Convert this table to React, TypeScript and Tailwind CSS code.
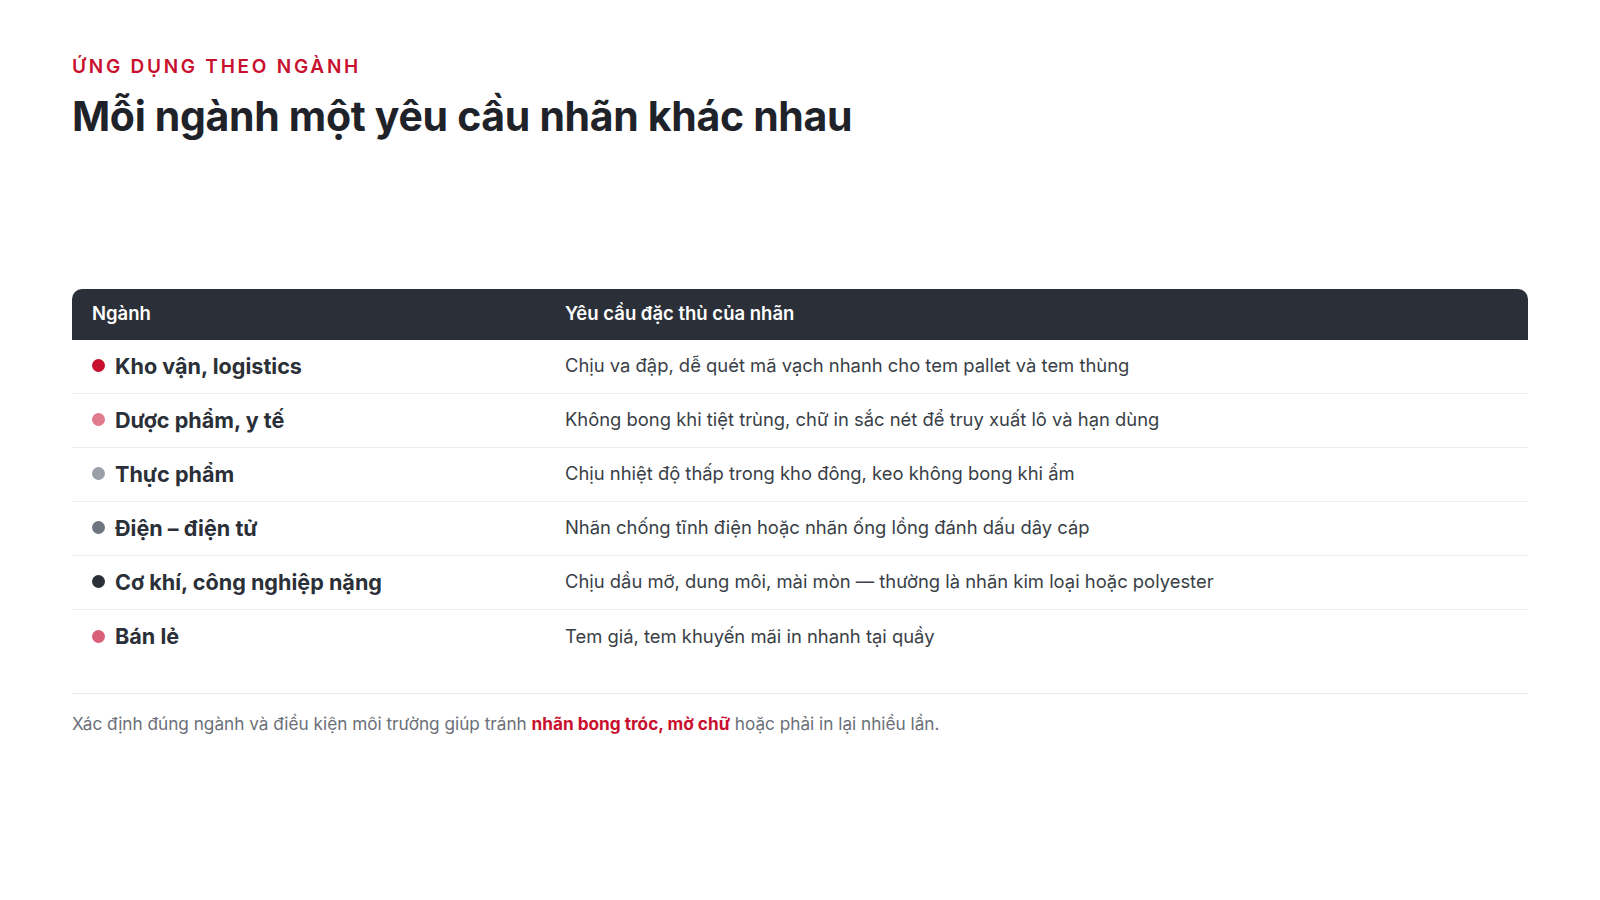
const rows = [
  { name: 'Kho vận, logistics', dot: 'bg-[#c8102e]', desc: 'Chịu va đập, dễ quét mã vạch nhanh cho tem pallet và tem thùng' },
  { name: 'Dược phẩm, y tế', dot: 'bg-[#e07a8c]', desc: 'Không bong khi tiệt trùng, chữ in sắc nét để truy xuất lô và hạn dùng' },
  { name: 'Thực phẩm', dot: 'bg-[#9aa0a8]', desc: 'Chịu nhiệt độ thấp trong kho đông, keo không bong khi ẩm' },
  { name: 'Điện – điện tử', dot: 'bg-[#6e7580]', desc: 'Nhãn chống tĩnh điện hoặc nhãn ống lồng đánh dấu dây cáp' },
  { name: 'Cơ khí, công nghiệp nặng', dot: 'bg-[#2b3038]', desc: 'Chịu dầu mỡ, dung môi, mài mòn — thường là nhãn kim loại hoặc polyester' },
  { name: 'Bán lẻ', dot: 'bg-[#d95f78]', desc: 'Tem giá, tem khuyến mãi in nhanh tại quầy' },
]

export default function App() {
  return (
    <div className="h-[900px] w-[1600px] bg-white px-[72px] pt-[53px] font-['Inter',sans-serif] text-[#1f2329]">
      <p className="text-[19px] font-semibold uppercase tracking-[0.145em] text-[#c8102e]">
        Ứng dụng theo ngành
      </p>
      <h1 className="mt-[8px] text-[41px] font-bold leading-[52px] tracking-[-0.008em] text-[#1f2329]">
        Mỗi ngành một yêu cầu nhãn khác nhau
      </h1>

      <div className="mt-[147px]">
        <div className="grid h-[51px] grid-cols-[496px_1fr] items-center rounded-t-[10px] bg-[#2b3038] text-[18.5px] font-semibold text-white">
          <div className="px-5">Ngành</div>
          <div className="-ml-[3px]">Yêu cầu đặc thù của nhãn</div>
        </div>
        {rows.map((r, i) => (
          <div
            key={r.name}
            className={`grid h-[54px] grid-cols-[496px_1fr] items-center ${i < rows.length - 1 ? 'border-b border-[#eceef1]' : ''}`}
          >
            <div className="flex items-center gap-[10px] px-5">
              <span className={`size-[13px] rounded-full ${r.dot}`} />
              <span className="text-[21.6px] font-bold text-[#2b3038]">{r.name}</span>
            </div>
            <div className="-ml-[3px] text-[18.4px] text-[#3a3f47]">{r.desc}</div>
          </div>
        ))}
      </div>

      <div className="mt-[29px] border-t border-[#e8eaed] pt-[17px] text-[17.2px] text-[#6b7079]">
        Xác định đúng ngành và điều kiện môi trường giúp tránh{' '}
        <span className="font-bold text-[#c8102e]">nhãn bong tróc, mờ chữ</span> hoặc phải in lại nhiều lần.
      </div>
    </div>
  )
}
